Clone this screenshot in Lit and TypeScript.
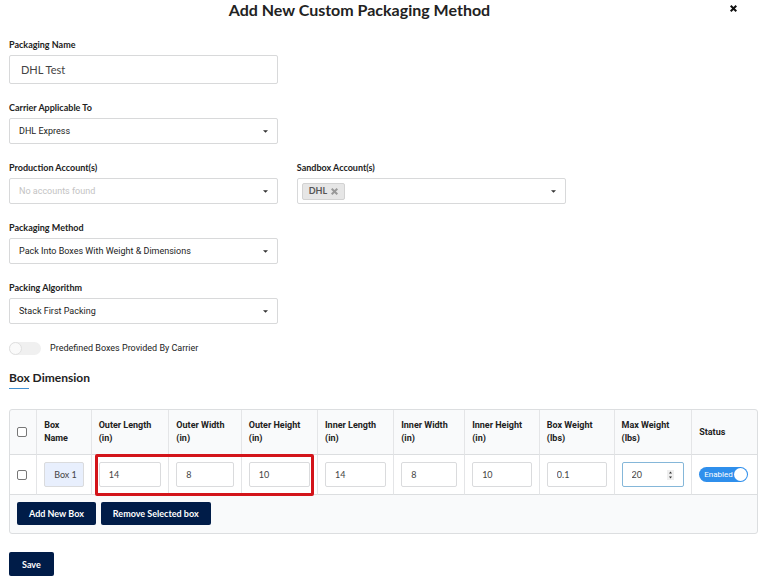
import { LitElement, html, css, svg } from "lit";
import { customElement, property, state } from "lit/decorators.js";

interface Column {
  head: [string, string];
  label: string;
  value: string;
}

const COLUMNS: Column[] = [
  { head: ["Outer Length", "(in)"], label: "Outer length", value: "14" },
  { head: ["Outer Width", "(in)"], label: "Outer width", value: "8" },
  { head: ["Outer Height", "(in)"], label: "Outer height", value: "10" },
  { head: ["Inner Length", "(in)"], label: "Inner length", value: "14" },
  { head: ["Inner Width", "(in)"], label: "Inner width", value: "8" },
  { head: ["Inner Height", "(in)"], label: "Inner height", value: "10" },
  { head: ["Box Weight", "(lbs)"], label: "Box weight", value: "0.1" },
];

const cross = svg`<path d="M2 0 L5 3 L8 0 L10 2 L7 5 L10 8 L8 10 L5 7 L2 10 L0 8 L3 5 L0 2 Z" fill="currentColor"/>`;

const caret = html`<svg class="caret" viewBox="0 0 6 3" aria-hidden="true">
  <path d="M0 0 H6 L3 3 Z" fill="currentColor" />
</svg>`;

@customElement("select-field")
export class SelectField extends LitElement {
  @property() label = "";
  @property() value = "";
  @property({ type: Boolean }) empty = false;
  @property() tag = "";

  static styles = css`
    :host {
      display: block;
      min-width: 0;
    }
    .label {
      display: block;
      font: 700 9px/14px Lato, sans-serif;
      margin-bottom: 3px;
    }
    .box {
      position: relative;
      display: flex;
      align-items: center;
      box-sizing: border-box;
      height: 26px;
      border: 1px solid #d8d9da;
      border-radius: 2px;
      background: #fff;
    }
    .select {
      appearance: none;
      flex: 1;
      min-width: 0;
      height: 100%;
      border: 0;
      margin: 0;
      padding: 0 20px 0 9px;
      background: none;
      color: #222;
      font: 400 9px/14px Roboto, sans-serif;
      outline: none;
    }
    .select.empty {
      color: #c3c3c3;
    }
    .caret {
      position: absolute;
      right: 9px;
      top: 11px;
      width: 5px;
      height: 3px;
      color: #333;
      pointer-events: none;
    }
    .tag {
      display: flex;
      align-items: center;
      gap: 4px;
      box-sizing: border-box;
      height: 17px;
      margin-left: 4px;
      padding: 0 6px;
      border: 1px solid #d2d2d2;
      border-radius: 2px;
      background: #e6e6e6;
      color: #555;
      font: 700 9px/14px Lato, sans-serif;
    }
    .remove {
      display: flex;
      border: 0;
      padding: 0;
      background: none;
      color: #999;
    }
    .remove svg {
      width: 7px;
      height: 7px;
    }
  `;

  render() {
    return html`
      <label class="label" for="control">${this.label}</label>
      <div class="box">
        ${this.tag
          ? html`<span class="tag"
              >${this.tag}<button class="remove" aria-label="Remove ${this.tag}">
                <svg viewBox="0 0 10 10">${cross}</svg>
              </button></span
            >`
          : ""}
        <select id="control" class="select ${this.empty ? "empty" : ""}">
          <option>${this.value}</option>
        </select>
        ${caret}
      </div>
    `;
  }
}

@customElement("app-root")
export class AppRoot extends LitElement {
  @state() private predefined = false;
  @state() private enabled = true;

  static styles = css`
    :host {
      display: block;
      color: #222;
      background: #fff;
      font: 400 9px/13px Roboto, sans-serif;
    }
    .header {
      display: grid;
      grid-template-columns: 1fr auto 1fr;
      align-items: start;
      padding: 0 24px 0 0;
      height: 38px;
      box-sizing: border-box;
    }
    .title {
      grid-column: 2;
      margin: 0 0 0 -20px;
      font: 700 16px/20px Lato, sans-serif;
    }
    .close {
      justify-self: end;
      display: flex;
      margin-top: 5px;
      padding: 0;
      border: 0;
      background: none;
      color: #111;
    }
    .close svg {
      width: 7px;
      height: 7px;
      margin: 0 2px 0 0;
    }
    .body {
      padding: 0 5px 0 9px;
    }
    .fields {
      display: grid;
      grid-template-columns: minmax(0, 268fr) minmax(0, 268fr) minmax(0, 173fr);
      gap: 17px 19px;
    }
    .first {
      grid-column: 1;
    }
    .label {
      display: block;
      font: 700 9px/14px Lato, sans-serif;
      margin-bottom: 3px;
    }
    .name {
      width: 100%;
      height: 29px;
      box-sizing: border-box;
      border: 1px solid #d8d9da;
      border-radius: 2px;
      padding: 0 11px;
      color: #444;
      font: 400 11px/16px Lato, sans-serif;
      outline: none;
    }
    .switch-row {
      display: flex;
      align-items: center;
      gap: 9px;
      margin-top: 18px;
    }
    .switch {
      appearance: none;
      position: relative;
      width: 32px;
      height: 13px;
      margin: 0;
      border-radius: 7px;
      background: #f0f0f0;
    }
    .switch::before {
      content: "";
      position: absolute;
      left: 0;
      top: 0;
      box-sizing: border-box;
      width: 13px;
      height: 13px;
      border: 1px solid #e0e0e0;
      border-radius: 50%;
      background: #fafafa;
    }
    .switch:checked::before {
      left: auto;
      right: 0;
    }
    .section {
      margin: 14px 0 0;
      font: 700 12px/18px Lato, sans-serif;
    }
    .section::after {
      content: "";
      display: block;
      width: 20px;
      height: 1px;
      margin-top: 1px;
      background: #3f8fd2;
    }
    .panel {
      position: relative;
      margin-top: 20px;
      border: 1px solid #dcdee0;
      border-radius: 3px;
      background: #f9fafb;
    }
    .table {
      width: 100%;
      table-layout: fixed;
      border-collapse: separate;
      border-spacing: 0;
    }
    .c-check { width: 3.5%; }
    .c-name { width: 7.3%; }
    .c-outer-length { width: 10.4%; }
    .c-outer-width { width: 9.7%; }
    .c-mid { width: 10.2%; }
    .c-inner-width { width: 9.5%; }
    .c-end { width: 10%; }
    .c-max { width: 10.4%; }
    .table th,
    .table td {
      box-sizing: border-box;
      padding: 0 7px;
      border-left: 1px solid #e4e5e7;
      border-bottom: 1px solid #dcdee0;
      text-align: left;
      vertical-align: middle;
    }
    .table th:first-child,
    .table td:first-child {
      border-left: 0;
    }
    .table th {
      height: 45px;
      font-weight: 700;
      white-space: nowrap;
    }
    .table td {
      height: 40px;
      background: #fff;
    }
    .unit {
      display: block;
    }
    .check {
      appearance: none;
      display: block;
      box-sizing: border-box;
      width: 10px;
      height: 10px;
      margin: 0;
      border: 1px solid #777;
      border-radius: 2px;
      background: #fff;
    }
    .check:checked {
      background: #2b8ae8;
    }
    .cell {
      display: block;
      width: 100%;
      height: 25px;
      box-sizing: border-box;
      border: 1px solid #dadbdd;
      border-radius: 2px;
      padding: 0 9px;
      background: #fff;
      color: #444;
      font: 400 9px/13px Lato, sans-serif;
      outline: none;
    }
    .cell.auto {
      background: #e8effd;
      padding-right: 6px;
    }
    .cell.active {
      border-color: #85b7d9;
    }
    .stepper {
      position: relative;
      display: block;
    }
    .arrows {
      position: absolute;
      right: 10px;
      top: 8px;
      width: 7px;
      height: 10px;
      background: #efefef;
    }
    .status {
      position: relative;
      display: flex;
      width: 49px;
      height: 15px;
    }
    .status-input {
      appearance: none;
      position: relative;
      width: 100%;
      height: 100%;
      margin: 0;
      border-radius: 8px;
      background: #2f8fec;
    }
    .status-input::before {
      content: "";
      position: absolute;
      top: 1px;
      right: 1px;
      width: 13px;
      height: 13px;
      border-radius: 50%;
      background: #fff;
    }
    .status-text {
      position: absolute;
      left: 5px;
      top: 1px;
      color: #fff;
      font-size: 8px;
      line-height: 13px;
    }
    .actions {
      display: flex;
      gap: 5px;
      padding: 7px 7px 8px;
    }
    .button {
      height: 23px;
      border: 0;
      border-radius: 2px;
      padding: 0 12px;
      background: #001c48;
      color: #fff;
      font: 700 9px/13px Lato, sans-serif;
    }
    .save {
      display: block;
      margin-top: 18px;
      height: 24px;
      padding: 0 13px;
    }
    .highlight {
      position: absolute;
      left: 11.4%;
      top: 44px;
      width: 29.3%;
      height: 42px;
      box-sizing: border-box;
      border: 3px solid #d3141a;
      border-radius: 2px;
      pointer-events: none;
    }
  `;

  render() {
    return html`
      <header class="header">
        <h1 class="title">Add New Custom Packaging Method</h1>
        <button class="close" aria-label="Close">
          <svg viewBox="0 0 10 10">${cross}</svg>
        </button>
      </header>
      <main class="body">
        <div class="fields">
          <div class="first">
            <label class="label" for="name">Packaging Name</label>
            <input id="name" class="name" type="text" value="DHL Test" />
          </div>
          <select-field class="first" label="Carrier Applicable To" value="DHL Express"></select-field>
          <select-field class="first" label="Production Account(s)" value="No accounts found" empty></select-field>
          <select-field label="Sandbox Account(s)" tag="DHL"></select-field>
          <select-field
            class="first"
            label="Packaging Method"
            value="Pack Into Boxes With Weight &amp; Dimensions"
          ></select-field>
          <select-field class="first" label="Packing Algorithm" value="Stack First Packing"></select-field>
        </div>

        <div class="switch-row">
          <input
            id="predefined"
            class="switch"
            type="checkbox"
            role="switch"
            .checked=${this.predefined}
            @change=${() => (this.predefined = !this.predefined)}
          />
          <label for="predefined">Predefined Boxes Provided By Carrier</label>
        </div>

        <h2 class="section">Box Dimension</h2>

        <div class="panel">
          <table class="table">
            <colgroup>
              <col class="c-check" />
              <col class="c-name" />
              <col class="c-outer-length" />
              <col class="c-outer-width" />
              <col class="c-mid" />
              <col class="c-mid" />
              <col class="c-inner-width" />
              <col class="c-end" />
              <col class="c-end" />
              <col class="c-max" />
              <col />
            </colgroup>
            <thead>
              <tr>
                <th><input class="check" type="checkbox" aria-label="Select all boxes" /></th>
                <th>Box <span class="unit">Name</span></th>
                ${COLUMNS.map((c) => html`<th>${c.head[0]} <span class="unit">${c.head[1]}</span></th>`)}
                <th>Max Weight <span class="unit">(lbs)</span></th>
                <th>Status</th>
              </tr>
            </thead>
            <tbody>
              <tr>
                <td><input class="check" type="checkbox" aria-label="Select Box 1" /></td>
                <td><input class="cell auto" type="text" aria-label="Box name" value="Box 1" /></td>
                ${COLUMNS.map(
                  (c) => html`<td>
                    <input class="cell" type="text" inputmode="decimal" aria-label=${c.label} value=${c.value} />
                  </td>`
                )}
                <td>
                  <span class="stepper">
                    <input class="cell active" type="text" inputmode="decimal" aria-label="Max weight" value="20" />
                    <svg class="arrows" viewBox="0 0 7 10" aria-hidden="true">
                      <path d="M2 3.5 L3.5 1.5 L5 3.5 Z M2 6.5 L3.5 8.5 L5 6.5 Z" fill="#333" />
                    </svg>
                  </span>
                </td>
                <td>
                  <label class="status">
                    <input
                      class="status-input"
                      type="checkbox"
                      role="switch"
                      .checked=${this.enabled}
                      @change=${() => (this.enabled = !this.enabled)}
                    />
                    <span class="status-text">Enabled</span>
                  </label>
                </td>
              </tr>
            </tbody>
          </table>
          <div class="actions">
            <button class="button">Add New Box</button>
            <button class="button">Remove Selected box</button>
          </div>
          <div class="highlight"></div>
        </div>

        <button class="button save">Save</button>
      </main>
    `;
  }
}
